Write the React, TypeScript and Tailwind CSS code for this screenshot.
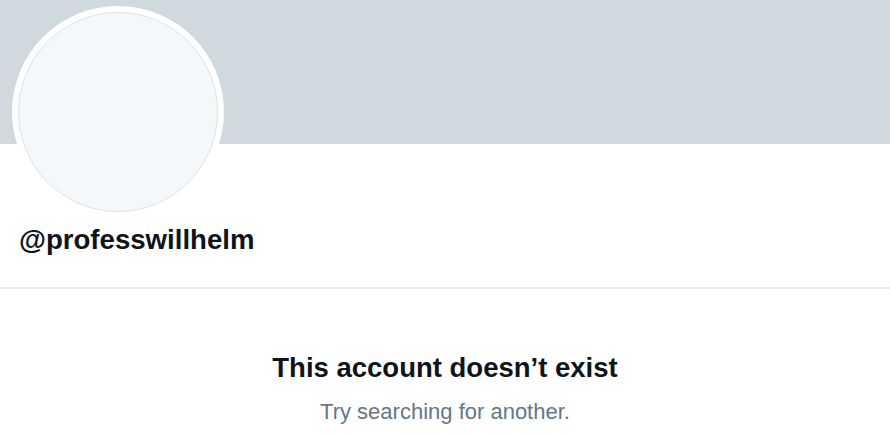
export default function App() {
  return (
    <div className="w-[890px] h-[436px] bg-white overflow-hidden font-['Liberation_Sans',Arial,sans-serif]">
      <div className="h-[144px] bg-[#cfd9de]" />

      <div className="px-[12px]">
        <div className="-mt-[138px] w-[212px] h-[212px] rounded-full bg-white p-[6px]">
          <div className="w-full h-full rounded-full bg-[#f5f8fa] border border-[#dde3e7]" />
        </div>
        <div className="pl-[7px] mt-[8px] text-[27.6px] leading-[28px] font-bold text-[#0f1419]">
          @professwillhelm
        </div>
      </div>

      <div className="mt-[33px] h-[2px] bg-[#e7ebee]" />

      <div className="flex flex-col items-center pt-[65px]">
        <h1 className="text-[27.5px] leading-[28px] font-bold text-[#0f1419]">
          This account doesn’t exist
        </h1>
        <p className="mt-[17px] text-[22px] leading-[26px] text-[#657786]">
          Try searching for another.
        </p>
      </div>
    </div>
  );
}
